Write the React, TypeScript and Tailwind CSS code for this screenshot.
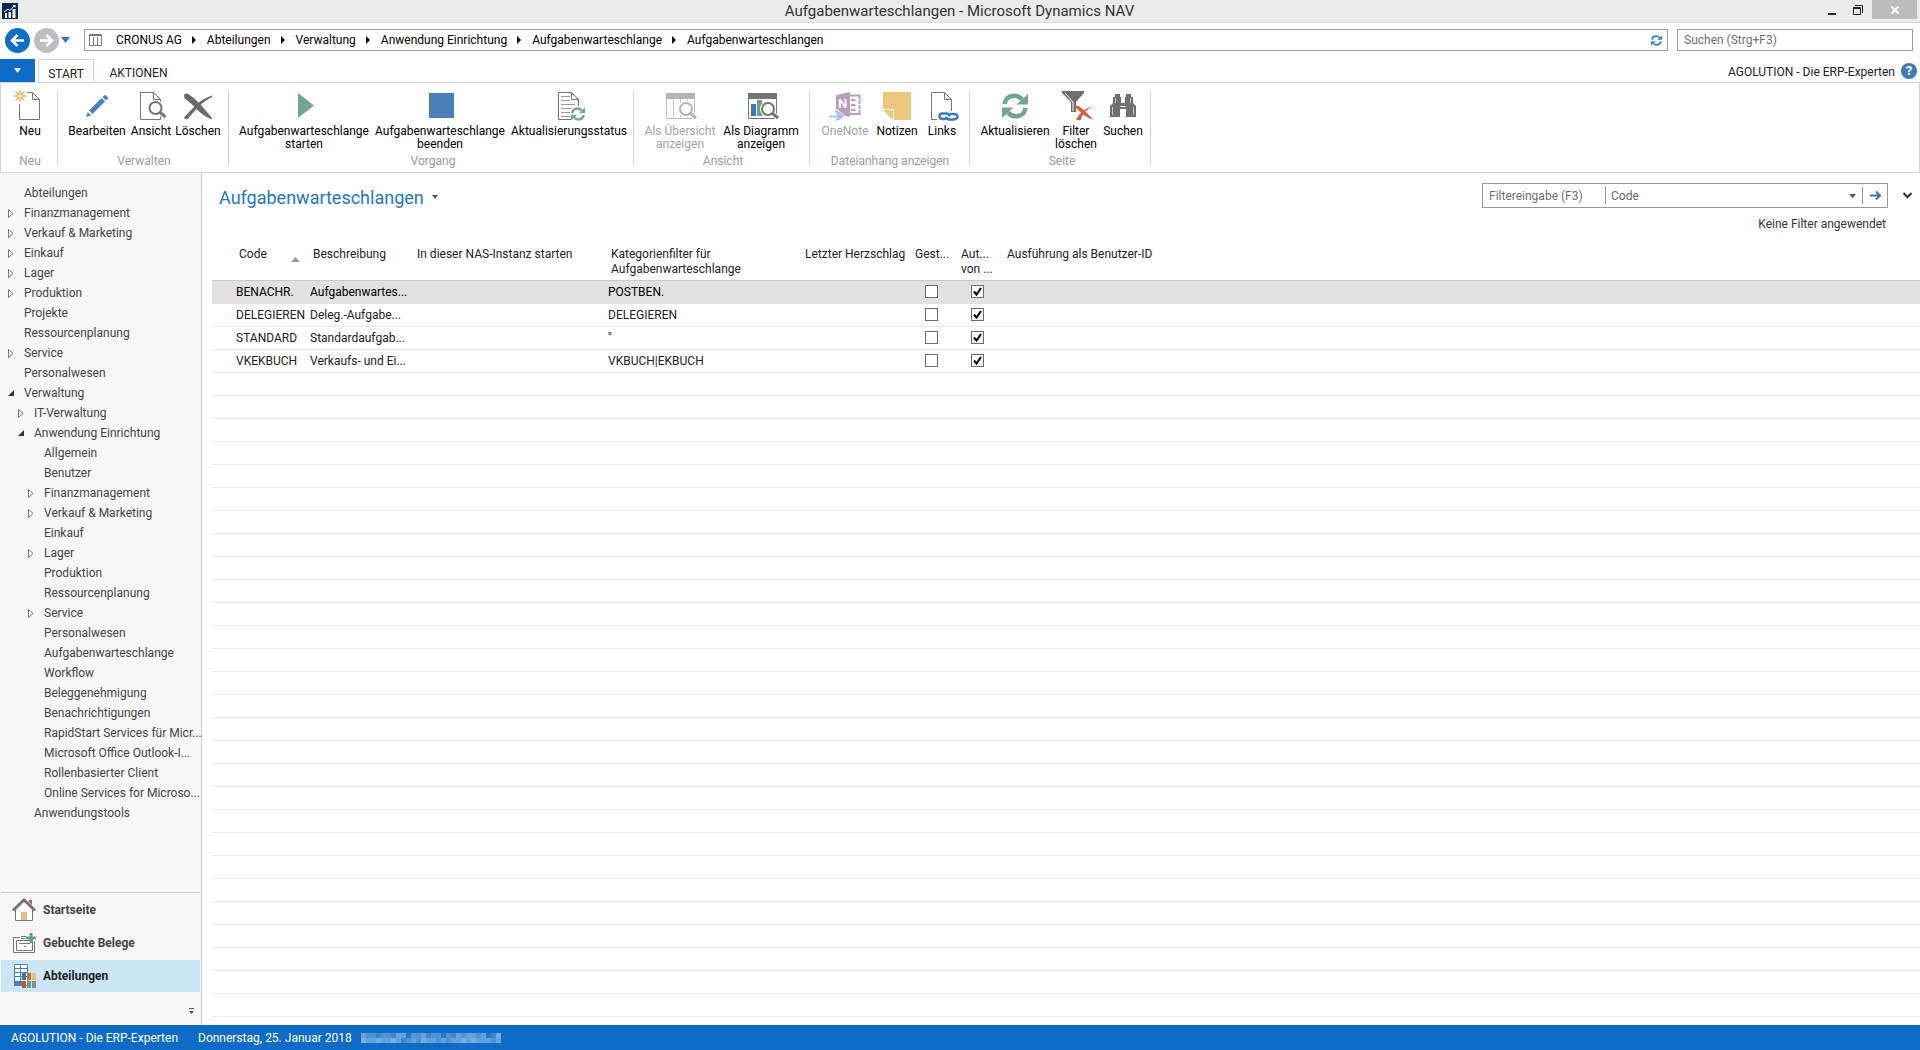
import type { ReactNode } from "react";
import clsx from "clsx";

const GREY = "#757575";
const BLUE = "#4a80b8";
const GREEN = "#74a492";

/* ---------- icons ---------- */

function Icon({ children }: { children: ReactNode }) {
  return (
    <svg width="36" height="31" viewBox="-2 0 36 31" fill="none" aria-hidden="true">
      {children}
    </svg>
  );
}

function Page() {
  return (
    <g stroke={GREY}>
      <path d="M5.5 2.5H18.5L25.5 9.5V29.5H5.5Z" fill="#fff" />
      <path d="M18.5 2.5V9.5H25.5" />
    </g>
  );
}

function Lens({ x, y, color = GREY }: { x: number; y: number; color?: string }) {
  return (
    <g stroke={color}>
      <circle cx={x} cy={y} r="8" fill="#fff" stroke="none" />
      <path d={`M${x + 4} ${y + 4}L${x + 11} ${y + 10}`} stroke="#fff" strokeWidth="5" />
      <circle cx={x} cy={y} r="6" fill="#fff" strokeWidth="2" />
      <path d={`M${x + 4} ${y + 4}L${x + 10} ${y + 9}`} strokeWidth="3" />
    </g>
  );
}

function Cycle({ size, color }: { size: number; color: string }) {
  return (
    <svg width={size} height={size} viewBox="0 0 26 26" fill="none" aria-hidden="true">
      <path d="M2.5 11C4 1.5 15 .5 20 6.5" stroke={color} strokeWidth="4.5" />
      <path d="M26 1V11.5H14.5Z" fill={color} />
      <path d="M23.5 15C22 24.5 11 25.5 6 19.5" stroke={color} strokeWidth="4.5" />
      <path d="M0 25V14.5H11.5Z" fill={color} />
    </svg>
  );
}

const icons = {
  neu: (
    <Icon>
      <path d="M5.5 14V29.5H25.5V9.5L18.5 2.5H13M18.5 2.5V9.5H25.5" stroke={GREY} />
      <g stroke="#ecb95c" strokeWidth="1.5">
        <circle cx="6" cy="6" r="2.5" />
        <path d="M6 0V3M6 9V12M0 6H3M9 6H12M1.5 1.5L4 4M8 8L10.5 10.5M10.5 1.5L8 4M4 8L1.5 10.5" />
      </g>
    </Icon>
  ),
  bearbeiten: (
    <Icon>
      <g fill="#4a83c4">
        <path d="M8 20.5L20.5 8L24 11.5L11.500 24Z" />
        <path d="M5 27L6.8 22L10.2 25.400Z" />
        <path d="M21.5 7L23 5.500Q24 4.5 25 5.500L26.500 7Q27.500 8 26.500 9L25 10.500Z" />
      </g>
    </Icon>
  ),
  ansicht: (
    <Icon>
      <Page />
      <Lens x={20.5} y={18} />
    </Icon>
  ),
  loeschen: (
    <Icon>
      <g fill="#6a6a6a">
        <path d="M2 5Q3.5 2.5 7 4.5Q14 9 19 15Q24 21 30 28L29.5 29.5Q20 25 14.5 19Q8 12 2.5 8.5Z" />
        <path d="M30 5.5Q19.5 9 13 16Q7 22 2 27.5Q3 30 5.5 29Q9 25 15 18.5Q22 11 30 7Z" />
      </g>
    </Icon>
  ),
  starten: (
    <Icon>
      <path d="M10 3L26 15.5L10 28Z" fill={GREEN} />
    </Icon>
  ),
  beenden: (
    <Icon>
      <path d="M5 3H30V28H5Z" fill={BLUE} />
    </Icon>
  ),
  status: (
    <Icon>
      <Page />
      <path d="M8 6.5H17M8 10.5H17M8 14.5H22M8 18.5H22M8 22.5H18M8 26.5H17" stroke="#999" />
      <circle cx="25" cy="24" r="8" fill="#fff" />
      <svg x="18" y="17" width="14" height="14">
        <Cycle size={14} color={GREEN} />
      </svg>
    </Icon>
  ),
  uebersicht: (
    <Icon>
      <path d="M2.5 3.5H30.5V28.5H2.5Z" stroke="#bdbdbd" />
      <path d="M2 3H31V9H2Z" fill="#b5b5b5" />
      <path d="M9.5 9V28M16.5 9V28M23.5 9V28" stroke="#c8c8c8" />
      <Lens x={22} y={19} color="#b5b5b5" />
    </Icon>
  ),
  diagramm: (
    <Icon>
      <path d="M3.5 3.5H31.5V28.5H3.5Z" stroke={GREY} />
      <path d="M3 3H32V9H3Z" fill={GREY} />
      <path d="M6 14H11V26H6Z" fill="#3f74b5" />
      <path d="M12 10H17V26H12Z" fill="#67a08c" />
      <path d="M18 12H23V26H18Z" fill={GREY} />
      <Lens x={23} y={19} />
    </Icon>
  ),
  onenote: (
    <Icon>
      <path d="M21 5.5H30.5V24H21" stroke="#bb9cbf" strokeWidth="2" />
      <path d="M22 10H27M22 15H27M22 20H27" stroke="#bb9cbf" strokeWidth="2" />
      <path d="M26 9.5H32M26 14.5H32M26 19.5H32" stroke="#fff" />
      <path d="M7 5L21 2V27L7 24Z" fill="#bb9cbf" />
      <text x="9" y="18" fontSize="13" fontWeight="700" fill="#fff">N</text>
      <path d="M0 25H8L4.5 20H9L16 26.5L9 31H4.5L8 28H0Z" fill="#a9c3e0" stroke="#fff" />
    </Icon>
  ),
  notizen: (
    <Icon>
      <path d="M2 2H30V30H12L2 20Z" fill="#ecc67c" />
      <path d="M2 19.5H12.5V30" stroke="#fff" />
    </Icon>
  ),
  links: (
    <Icon>
      <Page />
      <rect x="11" y="21" width="23" height="10" fill="#fff" />
      <g stroke="#3f7ab8" strokeWidth="2.5">
        <path d="M20 29H17Q13.5 29 13.5 26T17 23.5H20Q23.5 23.5 23.5 26.5" />
        <path d="M24 24H27.5Q31.5 24 31.5 26.5T27.5 29.5H24Q20 29.5 20 26.5" />
      </g>
    </Icon>
  ),
  aktualisieren: (
    <Icon>
      <svg x="3" y="3" width="26" height="26">
        <Cycle size={26} color={GREEN} />
      </svg>
    </Icon>
  ),
  filter: (
    <Icon>
      <path d="M2 1H24V3L16 12V22H11V12L2 3Z" fill="#6f6f6f" />
      <path d="M5 3L13 12V21" stroke="#fff" />
      <g fill="#cf5f45">
        <path d="M16 16Q18 15 20 17Q26 21 33 30Q25 27 16 18Z" />
        <path d="M33 16Q24 20 20.5 30Q18 31 16 29Q22 19 33 16Z" />
      </g>
    </Icon>
  ),
  suchen: (
    <Icon>
      <path d="M8 4H13V7H14V13H18V7H19V4H24V7H26V13L29 16V27H19V19H13V27H3V16L6 13V7H8Z" fill="#6f6f6f" />
      <path d="M5.5 17V25M26.5 17V25M8.5 8V13M23.5 8V13" stroke="#c8c8c8" />
      <path d="M13.5 16.5H18.5" stroke="#fff" />
    </Icon>
  ),
};

function BrandIcon() {
  return (
    <svg width="16" height="16" viewBox="0 0 16 16" aria-hidden="true">
      <path d="M0 0H16V16H0Z" fill="#0c2558" />
      <path d="M3 10H5V15H3ZM6.5 9H9V15H6.5ZM10.5 6H13.5V15H10.5Z" fill="#fff" />
      <path d="M2 9L6 6L8 7.5L12.5 2.5" stroke="#fff" fill="none" />
      <path d="M10.5 2H13.5V5Z" fill="#fff" />
    </svg>
  );
}

function ArrowCircle({ color, flip }: { color: string; flip?: boolean }) {
  return (
    <svg width="25" height="25" viewBox="0 0 25 25" className={clsx(flip && "rotate-180")} aria-hidden="true">
      <circle cx="12.5" cy="12.5" r="12.5" fill={color} />
      <path d="M19 12.5H8M12.5 7L7 12.5L12.5 18" stroke="#fff" strokeWidth="2.5" fill="none" />
    </svg>
  );
}

function Caret({ color, small }: { color: string; small?: boolean }) {
  return (
    <svg width={small ? 7 : 9} height={small ? 5 : 6} viewBox="0 0 9 6" aria-hidden="true">
      <path d="M0 0H9L4.5 6Z" fill={color} />
    </svg>
  );
}

function HomeIcon() {
  return (
    <svg width="24" height="24" viewBox="0 0 24 24" fill="none" aria-hidden="true">
      <path d="M17 2H20V7L17 4Z" fill="#cf5a3c" />
      <path d="M3.5 11V22.5H20.5V11L12 3Z" fill="#fff" stroke={GREY} />
      <path d="M1 12.5L12 2L23 12.5" stroke={GREY} strokeWidth="3" />
      <path d="M9 14H15V22H9Z" fill="#e8bd80" />
    </svg>
  );
}

function DocsIcon() {
  return (
    <svg width="24" height="24" viewBox="0 0 24 24" fill="none" aria-hidden="true">
      <path d="M8 6.5H1.5V21.5H22.5V10" stroke={GREY} />
      <path d="M4.5 19.5V9.5H20.5V19.5Z" fill="#fff" stroke={GREY} />
      <path d="M7 12.5H18M9 5.5H14M9 7.5H13M12 15.5H14" stroke={GREY} />
      <path d="M17.5 2H20.5V5.5H24V8.5H20.5V12H17.5V8.5H14V5.5H17.5Z" fill="#5fa48a" />
    </svg>
  );
}

function DepartmentsIcon() {
  return (
    <svg width="24" height="24" viewBox="0 0 24 24" fill="none" aria-hidden="true">
      <path d="M2.5 .5H15.5V21.5H2.5Z" fill="#fff" stroke={BLUE} />
      <path d="M2 4.5H16M2 8.5H16M2 12.5H16M8.500 0V17" stroke={BLUE} />
      <path d="M2 17H10V22H2Z" fill={BLUE} />
      <path d="M10 9H14V16H10Z" fill="#3f74b5" />
      <path d="M15 9H19V16H15Z" fill="#cf722f" />
      <path d="M20 9H24V16H20Z" fill="#e8bd80" />
      <path d="M10 17H14V24H10Z" fill="#cf4f33" />
      <path d="M15 17H19V24H15Z" fill="#5fa48a" />
      <path d="M20 17H24V24H20Z" fill="#8c8c8c" />
    </svg>
  );
}

/* ---------- data ---------- */

const crumbs = [
  "CRONUS AG",
  "Abteilungen",
  "Verwaltung",
  "Anwendung Einrichtung",
  "Aufgabenwarteschlange",
  "Aufgabenwarteschlangen",
];

type Action = { label: string[]; icon: ReactNode; width: string; disabled?: boolean };

const groups: { name: string; pad: string; actions: Action[] }[] = [
  { name: "Neu", pad: "pl-[5px] pr-[3px]", actions: [{ label: ["Neu"], icon: icons.neu, width: "w-12" }] },
  {
    name: "Verwalten",
    pad: "pl-2 pr-1.5",
    actions: [
      { label: ["Bearbeiten"], icon: icons.bearbeiten, width: "w-[62px]" },
      { label: ["Ansicht"], icon: icons.ansicht, width: "w-[46px]" },
      { label: ["Löschen"], icon: icons.loeschen, width: "w-12" },
    ],
  },
  {
    name: "Vorgang",
    pad: "pl-[7px] pr-[3px]",
    actions: [
      { label: ["Aufgabenwarteschlange", "starten"], icon: icons.starten, width: "w-[136px]" },
      { label: ["Aufgabenwarteschlange", "beenden"], icon: icons.beenden, width: "w-[136px]" },
      { label: ["Aktualisierungsstatus"], icon: icons.status, width: "w-[122px]" },
    ],
  },
  {
    name: "Ansicht",
    pad: "pl-2 pr-[5px]",
    actions: [
      { label: ["Als Übersicht", "anzeigen"], icon: icons.uebersicht, width: "w-[76px]", disabled: true },
      { label: ["Als Diagramm", "anzeigen"], icon: icons.diagramm, width: "w-[86px]" },
    ],
  },
  {
    name: "Dateianhang anzeigen",
    pad: "pl-2 pr-[7px]",
    actions: [
      { label: ["OneNote"], icon: icons.onenote, width: "w-[54px]", disabled: true },
      { label: ["Notizen"], icon: icons.notizen, width: "w-[50px]" },
      { label: ["Links"], icon: icons.links, width: "w-10" },
    ],
  },
  {
    name: "Seite",
    pad: "pl-1.5 pr-0.5",
    actions: [
      { label: ["Aktualisieren"], icon: icons.aktualisieren, width: "w-[78px]" },
      { label: ["Filter", "löschen"], icon: icons.filter, width: "w-11" },
      { label: ["Suchen"], icon: icons.suchen, width: "w-[50px]" },
    ],
  },
];

type Node = { label: string; level: 0 | 1 | 2; state?: "closed" | "open" };

const tree: Node[] = [
  { label: "Abteilungen", level: 0 },
  { label: "Finanzmanagement", level: 0, state: "closed" },
  { label: "Verkauf & Marketing", level: 0, state: "closed" },
  { label: "Einkauf", level: 0, state: "closed" },
  { label: "Lager", level: 0, state: "closed" },
  { label: "Produktion", level: 0, state: "closed" },
  { label: "Projekte", level: 0 },
  { label: "Ressourcenplanung", level: 0 },
  { label: "Service", level: 0, state: "closed" },
  { label: "Personalwesen", level: 0 },
  { label: "Verwaltung", level: 0, state: "open" },
  { label: "IT-Verwaltung", level: 1, state: "closed" },
  { label: "Anwendung Einrichtung", level: 1, state: "open" },
  { label: "Allgemein", level: 2 },
  { label: "Benutzer", level: 2 },
  { label: "Finanzmanagement", level: 2, state: "closed" },
  { label: "Verkauf & Marketing", level: 2, state: "closed" },
  { label: "Einkauf", level: 2 },
  { label: "Lager", level: 2, state: "closed" },
  { label: "Produktion", level: 2 },
  { label: "Ressourcenplanung", level: 2 },
  { label: "Service", level: 2, state: "closed" },
  { label: "Personalwesen", level: 2 },
  { label: "Aufgabenwarteschlange", level: 2 },
  { label: "Workflow", level: 2 },
  { label: "Beleggenehmigung", level: 2 },
  { label: "Benachrichtigungen", level: 2 },
  { label: "RapidStart Services für Micr...", level: 2 },
  { label: "Microsoft Office Outlook-I...", level: 2 },
  { label: "Rollenbasierter Client", level: 2 },
  { label: "Online Services for Microso...", level: 2 },
  { label: "Anwendungstools", level: 1 },
];

const indent = { 0: "pl-2", 1: "pl-[18px]", 2: "pl-7" };

const places = [
  { label: "Startseite", icon: <HomeIcon /> },
  { label: "Gebuchte Belege", icon: <DocsIcon /> },
  { label: "Abteilungen", icon: <DepartmentsIcon />, active: true },
];

const rows = [
  { code: "BENACHR.", text: "Aufgabenwartes...", filter: "POSTBEN." },
  { code: "DELEGIEREN", text: "Deleg.-Aufgabe...", filter: "DELEGIEREN" },
  { code: "STANDARD", text: "Standardaufgab...", filter: "''" },
  { code: "VKEKBUCH", text: "Verkaufs- und Ei...", filter: "VKBUCH|EKBUCH" },
];

const EMPTY_ROWS = 28;

// opacity per block of the masked user name in the status bar
const mask = [
  [4, 3, 3, 2, 3, 3, 2, 4, 4, 1, 3, 3, 4, 2, 3, 3, 1, 3, 2, 4, 3, 4, 4, 3, 4, 1, 2, 5],
  [5, 4, 4, 5, 4, 4, 5, 4, 2, 3, 4, 3, 5, 4, 4, 3, 4, 3, 4, 4, 5, 4, 5, 4, 4, 4, 3, 4],
];

/* ---------- parts ---------- */

function TitleBar() {
  return (
    <header className="flex h-[23px] items-start border-b border-[#d9d9d9] bg-[#ebebeb]">
      <div className="flex flex-1 pl-0.5 pt-[3px]">
        <BrandIcon />
      </div>
      <h1 className="text-[15px] leading-[23px] text-[#333]">Aufgabenwarteschlangen - Microsoft Dynamics NAV</h1>
      <div className="flex flex-1 items-center justify-end pr-[3px]">
        <button type="button" aria-label="Minimieren" className="flex h-[19px] w-6 items-center justify-center">
          <svg width="8" height="10" viewBox="0 0 8 10">
            <path d="M0 8H8V10H0Z" fill="#222" />
          </svg>
        </button>
        <button type="button" aria-label="Wiederherstellen" className="flex h-[19px] w-7 items-center justify-center">
          <svg width="10" height="10" viewBox="0 0 10 10" fill="none" stroke="#222">
            <path d="M2 .5H9.5V8M.5 3H7.5V9.5H.5V2.5H7.5" />
            <path d="M.5 3H7.5" strokeWidth="2" />
          </svg>
        </button>
        <button type="button" aria-label="Schließen" className="flex h-[19px] w-[45px] items-center justify-center bg-[#bcbcbc]">
          <svg width="8" height="8" viewBox="0 0 8 8" stroke="#fff" strokeWidth="2">
            <path d="M.5 .5L7.5 7.5M7.5 .5L.5 7.5" />
          </svg>
        </button>
      </div>
    </header>
  );
}

function AddressBar() {
  return (
    <div className="flex h-9 items-center pb-0.5 pl-[5px] pr-[7px]">
      <button type="button" aria-label="Zurück">
        <ArrowCircle color="#0f6fc6" />
      </button>
      <button type="button" aria-label="Vorwärts" className="ml-1">
        <ArrowCircle color="#bebebe" flip />
      </button>
      <button type="button" aria-label="Verlauf" className="ml-0.5">
        <Caret color="#2a7ac4" />
      </button>
      <nav aria-label="Pfad" className="ml-3.5 flex h-[22px] flex-1 items-center border border-[#a0a0a0] pl-1">
        <svg width="13" height="12" viewBox="0 0 13 12" fill="none" stroke="#777" className="mr-3.5" aria-hidden="true">
          <path d="M.5 .5H12.5V11.5H.5ZM0 1.5H13M4.5 3V12M8.5 3V12" />
        </svg>
        {crumbs.map((crumb, i) => (
          <span key={crumb} className="flex items-center">
            {i > 0 && (
              <svg width="4" height="8" viewBox="0 0 4 8" className="ml-2.5 mr-[11px]" aria-hidden="true">
                <path d="M0 0L4 4L0 8Z" fill="#000" />
              </svg>
            )}
            <a href="#" className="text-black">{crumb}</a>
          </span>
        ))}
        <button type="button" aria-label="Aktualisieren" className="ml-auto mr-[5px]">
          <Cycle size={11} color="#3f86c8" />
        </button>
      </nav>
      <input
        type="text"
        aria-label="Suchen"
        placeholder="Suchen (Strg+F3)"
        className="ml-[9px] h-[22px] w-[236px] border border-[#a0a0a0] px-1.5 outline-none placeholder:text-[#6f6f6f]"
      />
    </div>
  );
}

function Ribbon() {
  return (
    <>
      <div className="flex h-[23px] items-end">
        <button type="button" aria-label="Anwendungsmenü" className="flex h-[23px] w-[35px] items-center justify-center bg-[#0f6cc6]">
          <Caret color="#fff" small />
        </button>
        <div role="tablist" className="flex">
          <button type="button" role="tab" aria-selected="true" className="-mb-px ml-[3px] h-6 w-14 border border-b-0 border-[#d4d4d4] bg-white pt-1 leading-[18px] text-[#222]">
            START
          </button>
          <button type="button" role="tab" aria-selected="false" className="h-[23px] w-[89px] pt-1 leading-[18px] text-[#222]">
            AKTIONEN
          </button>
        </div>
        <span className="ml-auto leading-[19px] text-[#222]">AGOLUTION - Die ERP-Experten</span>
        <button type="button" aria-label="Hilfe" className="mb-[3px] ml-1.5 mr-[3px] flex h-4 w-4 items-center justify-center rounded-full bg-[#3f7ab8] text-[13px] font-bold leading-4 text-white">
          ?
        </button>
      </div>
      <div className="flex border border-[#d4d4d4] pb-1.5 pt-[7px]">
        {groups.map((group) => (
          <section key={group.name} aria-label={group.name} className={clsx("flex flex-col border-r border-[#d4d4d4]", group.pad)}>
            <div className="flex">
              {group.actions.map((action) => (
                <button
                  key={action.label.join(" ")}
                  type="button"
                  disabled={action.disabled}
                  className={clsx(
                    "flex h-[66px] flex-col items-center leading-[13px] whitespace-nowrap",
                    action.width,
                    action.disabled ? "text-[#a3a3a3]" : "text-black"
                  )}
                >
                  <span className="mb-1">{action.icon}</span>
                  {action.label.map((line) => (
                    <span key={line}>{line}</span>
                  ))}
                </button>
              ))}
            </div>
            <p className="text-center leading-[10px] text-[#9b9b9b]">{group.name}</p>
          </section>
        ))}
      </div>
    </>
  );
}

function Sidebar() {
  return (
    <aside className="flex w-[202px] flex-shrink-0 flex-col border-r border-[#cfcfcf] bg-[#f7f7f7] text-[#444]">
      <ul className="flex-1 pt-2.5">
        {tree.map((node, i) => (
          <li key={i} className={clsx("flex h-5 items-center", indent[node.level])}>
            <span className="flex w-4 flex-shrink-0">
              {node.state === "closed" && (
                <svg width="6" height="9" viewBox="0 0 6 9" fill="#fff" stroke="#777" aria-hidden="true">
                  <path d="M.5 .5V8.5L5 4.5Z" />
                </svg>
              )}
              {node.state === "open" && (
                <svg width="6" height="6" viewBox="0 0 6 6" aria-hidden="true">
                  <path d="M6 0V6H0Z" fill="#333" />
                </svg>
              )}
            </span>
            <a href="#" className="whitespace-nowrap">{node.label}</a>
          </li>
        ))}
      </ul>
      <nav aria-label="Bereiche" className="ml-px mr-px flex flex-col gap-px border-t border-[#cfcfcf] pt-px">
        {places.map((place) => (
          <a
            key={place.label}
            href="#"
            className={clsx("flex h-8 items-center gap-[7px] pl-[11px] font-bold", place.active && "bg-[#cce6f7] text-[#222]")}
          >
            {place.icon}
            {place.label}
          </a>
        ))}
      </nav>
      <button type="button" aria-label="Schaltflächen konfigurieren" className="flex h-[33px] justify-end pr-[7px] pt-4">
        <svg width="5" height="6" viewBox="0 0 5 6" fill="#555">
          <path d="M0 0H5V1H0ZM0 3H5L2.5 6Z" />
        </svg>
      </button>
    </aside>
  );
}

function Check({ label, checked }: { label: string; checked: boolean }) {
  return (
    <span className="grid w-[13px]">
      <input
        type="checkbox"
        aria-label={label}
        defaultChecked={checked}
        className="peer col-start-1 row-start-1 h-[13px] w-[13px] appearance-none border border-[#6b6b6b] bg-white"
      />
      <svg width="13" height="13" viewBox="0 0 13 13" fill="none" className="pointer-events-none invisible col-start-1 row-start-1 peer-checked:visible" aria-hidden="true">
        <path d="M3 6.5L5.5 9.5L10 3" stroke="#000" strokeWidth="2" />
      </svg>
    </span>
  );
}

function QueueTable() {
  return (
    <table className="w-full table-fixed border-collapse text-left text-[#222]">
      <colgroup>
        <col className="w-[22px]" />
        <col className="w-[74px]" />
        <col className="w-[104px]" />
        <col className="w-[194px]" />
        <col className="w-[194px]" />
        <col className="w-[110px]" />
        <col className="w-[46px]" />
        <col className="w-[46px]" />
        <col />
      </colgroup>
      <thead>
        <tr className="h-[33px] border-b border-[#c8c8c8] align-top leading-[15px] whitespace-nowrap [&>th]:py-0 [&>th]:pl-[5px] [&>th]:font-normal">
          <td />
          <th scope="col" aria-sort="ascending">
            <span className="flex items-start">
              Code
              <svg width="9" height="5" viewBox="0 0 9 5" className="ml-auto mr-2 mt-2.5" aria-hidden="true">
                <path d="M0 5L4.5 0L9 5Z" fill="#999" />
              </svg>
            </span>
          </th>
          <th scope="col">Beschreibung</th>
          <th scope="col">In dieser NAS-Instanz starten</th>
          <th scope="col">Kategorienfilter für<br />Aufgabenwarteschlange</th>
          <th scope="col">Letzter Herzschlag</th>
          <th scope="col">Gest...</th>
          <th scope="col">Aut...<br />von ...</th>
          <th scope="col">Ausführung als Benutzer-ID</th>
        </tr>
      </thead>
      <tbody className="[&_td]:pl-0.5">
        {rows.map((row, i) => (
          <tr key={row.code} className={clsx("h-[23px] whitespace-nowrap border-b", i === 0 ? "border-[#e1e1e1] bg-[#e1e1e1] text-black" : "border-[#ebebeb]")}>
            <td />
            <td>{row.code}</td>
            <td>{row.text}</td>
            <td />
            <td>{row.filter}</td>
            <td />
            <td>
              <span className="flex pl-[13px]"><Check label={`Gestartet ${row.code}`} checked={false} /></span>
            </td>
            <td>
              <span className="flex pl-[13px]"><Check label={`Automatisch ${row.code}`} checked /></span>
            </td>
            <td />
          </tr>
        ))}
        {Array.from({ length: EMPTY_ROWS }, (_, i) => (
          <tr key={i} className="h-[23px] border-b border-[#ebebeb]">
            <td colSpan={9} />
          </tr>
        ))}
      </tbody>
    </table>
  );
}

function Content() {
  return (
    <main className="min-w-0 flex-1 overflow-hidden pl-2.5 pt-2.5">
      <div className="flex items-start pl-[7px] pr-2">
        <h2 className="text-[18px] leading-[30px] text-[#1f77bd]">Aufgabenwarteschlangen</h2>
        <button type="button" aria-label="Ansicht wählen" className="ml-2 mt-3">
          <svg width="6" height="4" viewBox="0 0 6 4">
            <path d="M0 0H6L3 4Z" fill="#555" />
          </svg>
        </button>
        <form className="ml-auto flex h-[25px] w-[406px] items-center border border-[#999] text-[#666]">
          <input
            type="text"
            aria-label="Filtereingabe"
            placeholder="Filtereingabe (F3)"
            className="w-[122px] pl-1.5 outline-none placeholder:text-[#6f6f6f]"
          />
          <span className="grid h-[17px] flex-1 items-center border-x border-[#999]">
            <select aria-label="Filterfeld" className="col-start-1 row-start-1 h-[17px] w-full appearance-none bg-transparent pl-[5px] outline-none">
              <option>Code</option>
            </select>
            <svg width="7" height="4" viewBox="0 0 7 4" className="pointer-events-none col-start-1 row-start-1 mr-1.5 justify-self-end" aria-hidden="true">
              <path d="M0 0H7L3.5 4Z" fill="#555" />
            </svg>
          </span>
          <button type="button" aria-label="Filter anwenden" className="flex w-6 justify-center">
            <svg width="11" height="9" viewBox="0 0 11 9" fill="none" stroke="#3f74b5" strokeWidth="2">
              <path d="M0 4.5H10M6 .5L10 4.5L6 8.5" />
            </svg>
          </button>
        </form>
        <button type="button" aria-label="Filterbereich einblenden" className="ml-[15px] mt-[9px]">
          <svg width="9" height="7" viewBox="0 0 9 7" fill="none" stroke="#333" strokeWidth="2">
            <path d="M.5 1L4.5 5L8.5 1" />
          </svg>
        </button>
      </div>
      <p className="pr-[34px] pt-[3px] text-right leading-[16px] text-[#333]">Keine Filter angewendet</p>
      <div className="pt-[15px]">
        <QueueTable />
      </div>
    </main>
  );
}

function StatusBar() {
  return (
    <footer className="flex h-[25px] items-center bg-[#0f6cc6] pl-[11px] text-white">
      <span className="w-[187px]">AGOLUTION - Die ERP-Experten</span>
      <span className="w-[163px]">Donnerstag, 25. Januar 2018</span>
      <svg width="140" height="10" viewBox="0 0 140 10" aria-hidden="true">
        {mask.map((line, y) =>
          line.map((v, x) => <rect key={`${x}-${y}`} x={x * 5} y={y * 5} width="5" height="5" fill="#fff" opacity={v * 0.09} />)
        )}
      </svg>
    </footer>
  );
}

export default function App() {
  return (
    <div className="flex min-h-screen flex-col bg-white font-['Roboto','Open_Sans',sans-serif] text-[12px] leading-[16px]">
      <TitleBar />
      <AddressBar />
      <Ribbon />
      <div className="flex flex-1">
        <Sidebar />
        <Content />
      </div>
      <StatusBar />
    </div>
  );
}
